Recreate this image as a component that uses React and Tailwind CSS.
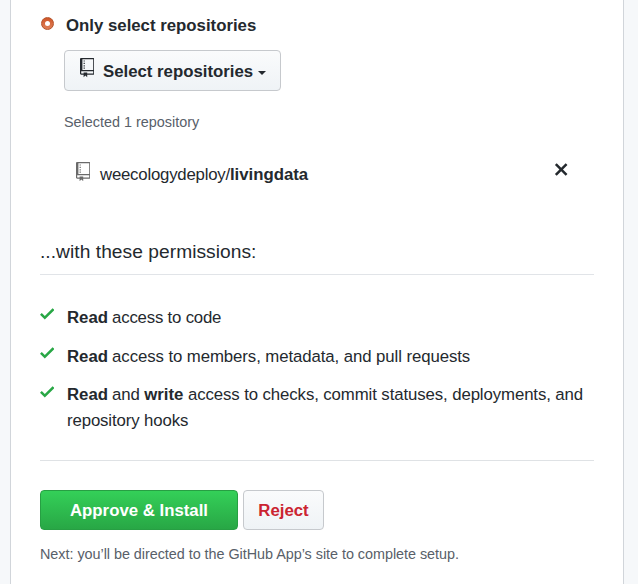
function RepoIcon({ className }) {
  return (
    <svg className={className} viewBox="0 0 12 16" fill="currentColor" aria-hidden="true">
      <path
        fillRule="evenodd"
        d="M4 9H3V8h1v1zm0-3H3v1h1V6zm0-2H3v1h1V4zm0-2H3v1h1V2zm8-1v12c0 .55-.45 1-1 1H6v2l-1.5-1.5L3 16v-2H1c-.55 0-1-.45-1-1V1c0-.55.45-1 1-1h10c.55 0 1 .45 1 1zm-1 10H1v2h2v-1h3v1h5v-2zm0-10H2v9h9V1z"
      />
    </svg>
  );
}

function CheckIcon() {
  return (
    <svg className="-mt-[0.7px] h-[19.2px] w-[14.4px] shrink-0 text-[#28a745]" viewBox="0 0 12 16" fill="currentColor" aria-hidden="true">
      <path fillRule="evenodd" d="M12 5l-8 8-4-4 1.5-1.5L4 10l6.5-6.5L12 5z" />
    </svg>
  );
}

function CloseIcon() {
  return (
    <svg className="h-[19.2px] w-[14.4px]" viewBox="0 0 12 16" fill="currentColor" aria-hidden="true">
      <path
        fillRule="evenodd"
        d="M7.48 8l3.75 3.75-1.48 1.48L6 9.48l-3.75 3.75-1.48-1.48L4.52 8 .77 4.25l1.48-1.48L6 6.52l3.75-3.75 1.48 1.48L7.48 8z"
      />
    </svg>
  );
}

function Permission({ children }) {
  return (
    <li className="flex gap-[12.6px]">
      <CheckIcon />
      <span className="whitespace-nowrap">{children}</span>
    </li>
  );
}

export default function App() {
  return (
    <div className="h-[584px] w-[638px] overflow-hidden bg-[#f6f8fa] pr-[14px] pl-[10px] font-['Liberation_Sans',Arial,sans-serif] text-[16.8px] leading-[26px] text-[#24292e]">
      <main className="flex h-full flex-col border-x border-[#d1d5da] bg-white px-[29px] pt-[13px]">
        <label className="flex h-[25px] items-start">
          <span className="mt-[4px] ml-px flex size-[13px] items-center justify-center rounded-full border border-[#b5532b] bg-linear-to-b from-[#cf5526] to-[#df8058]">
            <span className="size-[5px] rounded-full bg-white" />
          </span>
          <span className="ml-3 font-bold">Only select repositories</span>
        </label>

        <div className="mt-3 ml-6 flex flex-col items-start">
          <button className="flex h-[41px] w-[217px] items-center rounded-[4px] border border-[#c6c9cd] bg-linear-to-b from-[#fafbfc] to-[#eff3f6] pl-[15px] font-bold whitespace-nowrap">
            <RepoIcon className="mb-[5px] h-[19.2px] w-[14.4px]" />
            <span className="ml-[8.6px] pt-[2px]">Select repositories</span>
            <span className="mt-1 ml-[4.6px] border-x-4 border-t-4 border-x-transparent border-t-[#24292e]" />
          </button>
          <p className="mt-[21px] text-[14.4px] leading-5 text-[#586069]">Selected 1 repository</p>
        </div>

        <div className="mt-[29px] flex h-[26px] pr-[26px] pl-9">
          <RepoIcon className="mt-px h-[19.2px] w-[14.4px] text-[#6a6a6a]" />
          <span className="ml-[9.6px] pt-px tracking-[-0.22px]">
            weecologydeploy/<strong className="tracking-normal">livingdata</strong>
          </span>
          <button className="-mt-[0.6px] ml-auto self-start">
            <CloseIcon />
          </button>
        </div>

        <h2 className="mt-[47px] h-[41px] border-b border-[#e1e4e8] pt-1 text-[19.2px] leading-7 tracking-[0.04px]">...with these permissions:</h2>

        <ul className="mt-[30px] flex flex-col gap-[12.6px]">
          <Permission>
            <strong>Read</strong> <span className="-ml-[0.6px] tracking-[-0.2px]">access to code</span>
          </Permission>
          <Permission>
            <strong>Read</strong> <span className="-ml-[0.6px] tracking-[-0.085px]">access to members, metadata, and pull requests</span>
          </Permission>
          <Permission>
            <strong>Read</strong> <span className="-ml-[0.6px] tracking-[-0.15px]">and </span>
            <strong>write</strong> <span className="tracking-[-0.1px]">access to checks, commit statuses, deployments, and</span>
            <br />
            <span className="tracking-[-0.12px]">repository hooks</span>
          </Permission>
        </ul>

        <hr className="mt-[25.8px] border-[#dfe2e5]" />

        <div className="mt-[29px] flex gap-[5px]">
          <button className="h-10 w-[198px] rounded-[4px] border border-[#279f43] bg-linear-to-b from-[#34d058] to-[#28a745] pt-0.5 font-bold text-white">
            Approve &amp; Install
          </button>
          <button className="h-10 w-[81px] rounded-[4px] border border-[#c6c9cd] bg-linear-to-b from-[#fafbfc] to-[#eff3f6] pt-0.5 font-bold text-[#cb2431]">
            Reject
          </button>
        </div>

        <p className="mt-[14px] text-[14.4px] leading-5 tracking-[-0.035px] text-[#586069]">
          Next: you’ll be directed to the GitHub App’s site to complete setup.
        </p>
      </main>
    </div>
  );
}
